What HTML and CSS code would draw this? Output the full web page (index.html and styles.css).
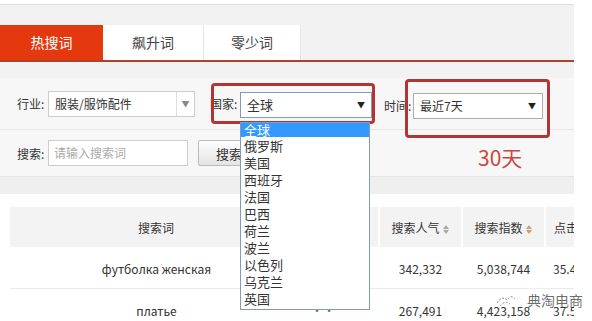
FILE: index.html
```html
<!DOCTYPE html>
<html lang="zh-CN">
<head>
  <meta charset="UTF-8">
  <title>热搜词</title>
  <link rel="stylesheet" href="styles.css">
</head>
<body>
  <div class="page">
    <div class="topbar"></div>

    <div class="tabs">
      <div class="tab active">热搜词</div>
      <div class="tab">飙升词</div>
      <div class="tab">零少词</div>
    </div>

    <div class="filters">
      <div class="filter-row">
        <span class="label">行业:</span>
        <div class="select industry">
          <span>服装/服饰配件</span>
          <span class="caret gray">▼</span>
        </div>
        <span class="label country-label">国家:</span>
        <div class="select country">
          <span>全球</span>
          <span class="caret">▼</span>
        </div>
        <span class="label time-label">时间:</span>
        <div class="select time">
          <span>最近7天</span>
          <span class="caret">▼</span>
        </div>
        <div class="mark mark-country"></div>
        <div class="mark mark-time"></div>
        <ul class="dropdown">
          <li class="on">全球</li>
          <li>俄罗斯</li>
          <li>美国</li>
          <li>西班牙</li>
          <li>法国</li>
          <li>巴西</li>
          <li>荷兰</li>
          <li>波兰</li>
          <li>以色列</li>
          <li>乌克兰</li>
          <li>英国</li>
        </ul>
      </div>
      <div class="filter-row second">
        <span class="label">搜索:</span>
        <div class="search-input">请输入搜索词</div>
        <button class="search-btn">搜索</button>
        <span class="note">30天</span>
      </div>
    </div>

    <div class="gap"></div>

    <div class="card">
      <div class="table-wrap">
        <table class="words">
          <thead>
            <tr>
              <th class="c-word">搜索词</th>
              <th class="c-hidden">&nbsp;</th>
              <th class="c-num">搜索人气<span class="sort"></span></th>
              <th class="c-num2">搜索指数<span class="sort active"></span></th>
              <th class="c-last">点击率</th>
            </tr>
          </thead>
          <tbody>
            <tr>
              <td>футболка женская</td>
              <td></td>
              <td>342,332</td>
              <td>5,038,744</td>
              <td class="left">35.4</td>
            </tr>
            <tr>
              <td>платье</td>
              <td class="dim">··</td>
              <td>267,491</td>
              <td>4,423,158</td>
              <td class="left">37.5</td>
            </tr>
          </tbody>
        </table>
      </div>
      <div class="watermark">
        <svg width="22" height="18" viewBox="0 0 22 18">
          <path d="M2 12 Q7 4 12 9 Q16 3 20 8" fill="none" stroke="#8a8a8a" stroke-width="1" stroke-dasharray="2 1.5"/>
          <path d="M5 15 Q10 9 15 13" fill="none" stroke="#9a9a9a" stroke-width="1" stroke-dasharray="2 1.5"/>
        </svg>
        <span>典淘电商</span>
      </div>
    </div>
  </div>
</body>
</html>
```

FILE: styles.css
```css
body {
  margin: 0;
  background-color: #fff;
  font-family: "Noto Sans CJK SC", "Liberation Sans", sans-serif;
  font-size: 12px;
  color: #333;
  overflow: hidden;
}

.page {
  width: 574px;
  height: 321px;
  background-color: #f2f2f2;
}

.topbar {
  height: 4px;
  background-color: #fff;
  border-bottom: 1px solid #d9dfe7;
}

/* tabs */
.tabs {
  display: flex;
  margin-top: 20px;
  height: 35px;
  border-bottom: 2px solid #b0402b;
}

.tab {
  width: 100px;
  background-color: #fff;
  border-right: 1px solid #e6e6e6;
  text-align: center;
  line-height: 35px;
  font-size: 14px;
  color: #444;
}

.tab.active {
  width: 103px;
  background-color: #e4390f;
  color: #fff;
  border-right: none;
}

.tab:last-child {
  width: 96px;
}

/* filters */
.filters {
  margin-top: 16px;
  background-color: #f7f7f7;
  border-bottom: 1px solid #e4e4e4;
}

.filter-row {
  position: relative;
  display: flex;
  align-items: center;
  height: 51px;
  padding-left: 17px;
  border-bottom: 1px solid #e6e6e6;
}

.filter-row.second {
  height: 46px;
  border-bottom: none;
}

.label {
  width: 31px;
  font-size: 12px;
  color: #333;
}

.select {
  display: flex;
  align-items: center;
  justify-content: space-between;
  box-sizing: border-box;
  height: 26px;
  padding: 0 6px;
  background-color: #fff;
  border: 1px solid #b9b9b9;
  font-size: 12px;
}

.select.industry {
  width: 147px;
  padding-right: 0;
  border-color: #ccc;
}

.select.industry .caret {
  width: 17px;
  height: 24px;
  line-height: 24px;
  text-align: center;
  border-left: 1px solid #ddd;
}

.select.country {
  width: 132px;
  margin-top: 2px;
  border-color: #7f9db9;
  font-size: 13px;
}

.select.time {
  width: 130px;
  margin-top: 4px;
  border-color: #adadad;
}

.caret {
  font-size: 8px;
  color: #222;
}

.caret.gray {
  color: #888;
}

.country-label {
  margin-left: 15px;
  width: 30px;
}

.time-label {
  margin-left: 12px;
  margin-top: 4px;
  width: 29px;
}

/* red hand-drawn highlights */
.mark {
  position: absolute;
  border: 3px solid #b23434;
  border-radius: 4px;
}

.mark-country {
  left: 211px;
  top: 5px;
  width: 158px;
  height: 35px;
}

.mark-time {
  left: 405px;
  top: 1px;
  width: 139px;
  height: 53px;
}

/* open country list */
.dropdown {
  position: absolute;
  left: 240px;
  top: 44px;
  z-index: 2;
  width: 128px;
  margin: 0;
  padding: 0 0 2px;
  list-style: none;
  background-color: #fff;
  border: 1px solid #7f9db9;
  font-size: 13px;
  line-height: 17px;
}

.dropdown li {
  padding-left: 3px;
  color: #333;
}

.dropdown li.on {
  height: 14px;
  line-height: 14px;
  overflow: hidden;
  background-color: #3399ff;
  color: #fff;
}

.search-input {
  box-sizing: border-box;
  width: 140px;
  height: 26px;
  padding-left: 5px;
  line-height: 24px;
  background-color: #fff;
  border: 1px solid #ccc;
  color: #aaa;
  font-size: 12px;
}

.search-btn {
  width: 62px;
  height: 26px;
  margin-left: 10px;
  padding: 0;
  border: 1px solid #bbb;
  border-radius: 2px;
  background: linear-gradient(#fdfdfd, #e4e4e4);
  font-family: inherit;
  font-size: 13px;
  color: #333;
}

.note {
  margin-left: 218px;
  margin-top: 8px;
  font-size: 21px;
  color: #c9483c;
}

.gap {
  height: 17px;
  background-color: #efefef;
}

/* table card */
.card {
  position: relative;
  height: 130px;
  padding: 13px 0 0 10px;
  background-color: #fff;
}

.table-wrap {
  width: 564px;
  overflow: hidden;
}

.words {
  border-collapse: collapse;
  table-layout: fixed;
  width: 580px;
  font-size: 12px;
}

.words th {
  height: 40px;
  padding: 0;
  background-color: #f3f3f3;
  border-right: 2px solid #fff;
  font-weight: normal;
  color: #333;
}

.words td {
  height: 39px;
  padding: 2px 0 0;
  text-align: center;
  border-bottom: 1px solid #ebebeb;
  color: #333;
}

.words tr:last-child td {
  border-bottom: none;
}

.c-word { width: 292px; }
.c-hidden { width: 74px; }
.c-num { width: 81px; }
.c-num2 { width: 81px; }
.c-last { width: 52px; text-align: left; padding-left: 8px !important; }

.words td.left {
  text-align: left;
  padding-left: 8px;
}

.words td.dim {
  color: #777;
  text-align: left;
  padding-left: 8px;
}

.sort {
  display: inline-block;
  position: relative;
  width: 7px;
  height: 9px;
  margin-left: 3px;
  vertical-align: -1px;
}

.sort::before,
.sort::after {
  content: "";
  position: absolute;
  left: 0;
  border-left: 3.5px solid transparent;
  border-right: 3.5px solid transparent;
}

.sort::before {
  top: 0;
  border-bottom: 4px solid #a8a8a8;
}

.sort::after {
  bottom: 0;
  border-top: 4px solid #a8a8a8;
}

.sort.active::before {
  border-bottom-color: #c9a27c;
}

.sort.active::after {
  border-top-color: #d29a64;
}

.watermark {
  position: absolute;
  left: 495px;
  top: 96px;
  display: flex;
  align-items: center;
  gap: 10px;
  white-space: nowrap;
  font-size: 14px;
  color: rgba(60, 60, 60, 0.75);
}
```
